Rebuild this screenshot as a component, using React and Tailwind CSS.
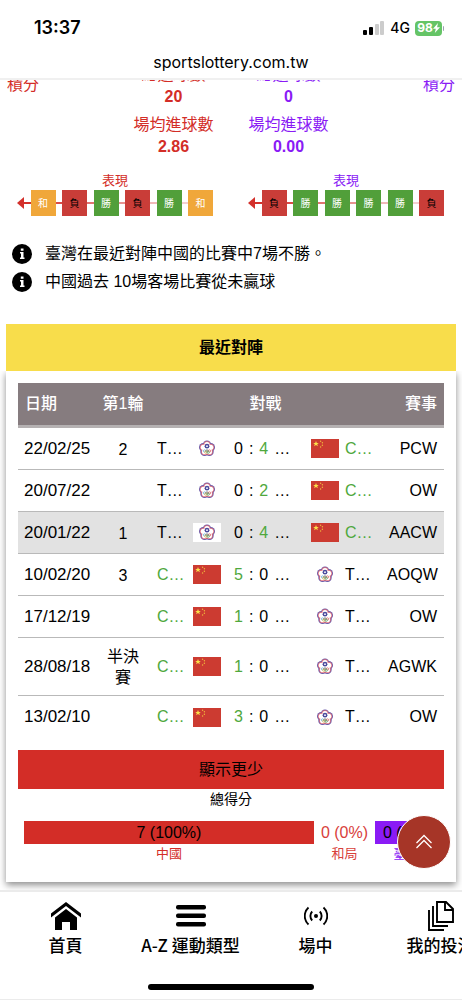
import clsx from 'clsx';

const matches = [
  { date: '22/02/25', round: '2', home: 'TPE', score: [0, 4], comp: 'PCW' },
  { date: '20/07/22', round: '', home: 'TPE', score: [0, 2], comp: 'OW' },
  { date: '20/01/22', round: '1', home: 'TPE', score: [0, 4], comp: 'AACW', active: true },
  { date: '10/02/20', round: '3', home: 'CHN', score: [5, 0], comp: 'AOQW' },
  { date: '17/12/19', round: '', home: 'CHN', score: [1, 0], comp: 'OW' },
  { date: '28/08/18', round: '半決賽', home: 'CHN', score: [1, 0], comp: 'AGWK' },
  { date: '13/02/10', round: '', home: 'CHN', score: [3, 0], comp: 'OW' },
];

const facts = ['臺灣在最近對陣中國的比賽中7場不勝。', '中國過去 10場客場比賽從未贏球'];

const formColors = {
  和: 'bg-[#f0a73a] text-white',
  負: 'bg-[#c93d38] text-black',
  勝: 'bg-[#519f3a] text-white',
};

// connectors get paler towards the older results
const linkColors = [
  'bg-[#d3302b]',
  'bg-[#d94b48]',
  'bg-[#e07472]',
  'bg-[#e79291]',
  'bg-[#f0b9b9]',
  'bg-[#f4d0d0]',
];

function ChinaFlag() {
  return (
    <svg className="mx-auto block" width="28" height="19" viewBox="0 0 28 19">
      <rect width="28" height="19" fill="#cc3b31" />
      <path
        d="M5 2l.8 1.900h2L6.200 5.200l.7 2L5 6 3.100 7.200l.7-2L2.200 3.900h2z"
        fill="#fbe04a"
      />
      <circle cx="9.600" cy="2.200" r=".7" fill="#f0b63c" />
      <circle cx="11.400" cy="3.800" r=".7" fill="#f0b63c" />
      <circle cx="11.400" cy="6.200" r=".7" fill="#f0b63c" />
      <circle cx="9.600" cy="8" r=".7" fill="#f0b63c" />
    </svg>
  );
}

function TaipeiFlag() {
  const petals = [
    [14, 5.7],
    [17.7, 8.3],
    [16.4, 12.7],
    [11.6, 12.7],
    [10.3, 8.3],
  ];
  return (
    <svg className="mx-auto block" width="28" height="19" viewBox="0 0 28 19">
      <rect width="28" height="19" fill="#fff" />
      {petals.map(([x, y]) => (
        <circle key={`o${x}-${y}`} cx={x} cy={y} r="4.3" fill="#6a5aa8" />
      ))}
      {petals.map(([x, y]) => (
        <circle key={`m${x}-${y}`} cx={x} cy={y} r="3.4" fill="#e0707c" />
      ))}
      {petals.map(([x, y]) => (
        <circle key={`i${x}-${y}`} cx={x} cy={y} r="2.6" fill="#fff" />
      ))}
      <circle cx="14" cy="9.700" r="4" fill="#fff" />
      <circle cx="14" cy="7.200" r="2.400" fill="#4b4a9c" />
      <circle cx="14" cy="7.200" r=".9" fill="#fff" />
      <g fill="none" strokeWidth=".7">
        <circle cx="11.600" cy="12" r="1.200" stroke="#5aa9d6" />
        <circle cx="14" cy="12" r="1.200" stroke="#555" />
        <circle cx="16.400" cy="12" r="1.200" stroke="#dd5555" />
        <circle cx="12.800" cy="13.200" r="1.200" stroke="#e3b94d" />
        <circle cx="15.200" cy="13.200" r="1.200" stroke="#4fae72" />
      </g>
    </svg>
  );
}

function StatusBar() {
  return (
    <div className="flex h-14 items-center justify-between pl-[34px] pr-[18px]">
      <span className="text-lg font-semibold">13:37</span>
      <div className="flex items-center">
        <svg width="22" height="14" viewBox="0 0 22 14">
          <rect x="0" y="9" width="4" height="5" rx="1" fill="#000" />
          <rect x="6" y="6" width="4" height="8" rx="1" fill="#000" />
          <rect x="12" y="3" width="4" height="11" rx="1" fill="#ccc" />
          <rect x="17" y="0" width="4" height="14" rx="1" fill="#ccc" />
        </svg>
        <span className="ml-[5px] text-sm font-medium">4G</span>
        <div className="ml-[5px] flex h-[15px] w-[27px] items-center justify-center rounded bg-[#65c466] text-xs font-bold text-white">
          98
          <svg width="7" height="10" viewBox="0 0 7 10">
            <path d="M5 0L0 5.800h2.800L1.800 10 7 4.200H4.100z" fill="#fff" />
          </svg>
        </div>
        <span className="ml-px h-[5px] w-px rounded-r bg-gray-400" />
      </div>
    </div>
  );
}

function StatColumn({ total, average }) {
  return (
    <dl className="text-center">
      <dt className="leading-[26px]">總進球數</dt>
      <dd className="mb-[6px] font-bold leading-[18px]">{total}</dd>
      <dt className="leading-[26px]">場均進球數</dt>
      <dd className="font-bold leading-[18px]">{average}</dd>
    </dl>
  );
}

function Form({ results, color }) {
  return (
    <div className="flex-1 pl-[17px] pr-[18px]">
      <p className={clsx('text-center text-[13px] leading-[18px]', color)}>表現</p>
      <div className="flex items-center">
        <svg width="7" height="12" viewBox="0 0 7 12">
          <path d="M7 0v12L0 6z" fill="#d3302b" />
        </svg>
        {results.map((r, i) => (
          <div key={i} className="flex flex-1 items-center">
            <span className={clsx('h-[2px] flex-1', linkColors[i])} />
            <span
              className={clsx(
                'flex h-[26px] w-[25px] items-center justify-center text-[10px]',
                formColors[r]
              )}
            >
              {r}
            </span>
          </div>
        ))}
      </div>
    </div>
  );
}

function TeamName({ team }) {
  return team === 'CHN' ? <span className="text-[#4fa83d]">C…</span> : <span>T…</span>;
}

function Flag({ team }) {
  return team === 'CHN' ? <ChinaFlag /> : <TaipeiFlag />;
}

function MatchRow({ match, last }) {
  const away = match.home === 'CHN' ? 'TPE' : 'CHN';
  const [h, a] = match.score;
  const cell = clsx('h-[42px] p-0', !last && 'border-b border-[#b9b9b9]');
  return (
    <tr className={clsx(match.active && 'bg-[#e2e2e2]')}>
      <td className={clsx(cell, 'text-[17px]')}>
        <span className="pl-[6px]">{match.date}</span>
      </td>
      <td className={clsx(cell, 'text-center leading-[21px]')}>
        <div className="mx-1 pt-2 pb-[7px]">{match.round}</div>
      </td>
      <td className={cell}>
        <span className="pl-[13px]">
          <TeamName team={match.home} />
        </span>
      </td>
      <td className={cell}>
        <Flag team={match.home} />
      </td>
      <td className={cell}>
        <div className="flex gap-[6px] pl-[7px]">
          <span className={clsx(h > a && 'text-[#4fa83d]')}>{h}</span>
          <span>:</span>
          <span className={clsx(a > h && 'text-[#4fa83d]')}>{a}</span>
          <span>…</span>
        </div>
      </td>
      <td className={cell}>
        <Flag team={away} />
      </td>
      <td className={cell}>
        <TeamName team={away} />
      </td>
      <td className={clsx(cell, 'text-right')}>
        <span className="pr-[7px]">{match.comp}</span>
      </td>
    </tr>
  );
}

function MatchTable() {
  const head = 'h-[45px] border-b-[3px] border-[#b5b1b2] p-0 font-medium';
  return (
    <table className="w-full table-fixed border-separate border-spacing-0">
      <colgroup>
        <col className="w-[84px]" />
        <col className="w-[42px]" />
        <col className="w-[43px]" />
        <col className="w-[40px]" />
        <col className="w-[77px]" />
        <col className="w-[41px]" />
        <col className="w-[42px]" />
        <col />
      </colgroup>
      <thead className="bg-[#867c7f] text-white">
        <tr>
          <th className={clsx(head, 'pl-[7px] text-left')}>日期</th>
          <th className={clsx(head, 'whitespace-nowrap')}>第1輪</th>
          <th colSpan={5} className={head}>
            對戰
          </th>
          <th className={clsx(head, 'pr-[7px] text-right')}>賽事</th>
        </tr>
      </thead>
      <tbody>
        {matches.map((m, i) => (
          <MatchRow key={m.date} match={m} last={i === matches.length - 1} />
        ))}
      </tbody>
    </table>
  );
}

function TotalScore() {
  return (
    <div className="text-center">
      <h3 className="text-sm leading-5">總得分</h3>
      <div className="mt-3 flex gap-[7px] px-[6px] leading-[23px]">
        <div className="flex-1">
          <div className="bg-[#d32d27]">7 (100%)</div>
          <div className="text-[13px] leading-5 text-[#d32d27]">中國</div>
        </div>
        <div className="text-[#d8403b]">
          <div>0 (0%)</div>
          <div className="text-[13px] leading-5">和局</div>
        </div>
        <div className="w-[63px]">
          <div className="bg-[#8a1bf5]">0 (0%)</div>
          <div className="text-[13px] leading-5 text-[#8a1bf5]">臺灣</div>
        </div>
      </div>
    </div>
  );
}

const navItems = [
  {
    label: '首頁',
    icon: (
      <svg width="30" height="28" viewBox="0 0 30 28">
        <path d="M0 11.500L15 0l15 11.500v4L15 4 0 15.500z" />
        <path d="M4 15.500L15 7l11 8.500V28h-7v-8h-8v8H4z" />
      </svg>
    ),
  },
  {
    label: 'A-Z 運動類型',
    icon: (
      <svg width="30" height="28" viewBox="0 0 30 28">
        <rect y="3" width="30" height="4.500" rx="2" />
        <rect y="11.500" width="30" height="4.500" rx="2" />
        <rect y="20" width="30" height="4.500" rx="2" />
      </svg>
    ),
  },
  {
    label: '場中',
    icon: (
      <svg width="24" height="28" viewBox="0 0 24 28" fill="none" stroke="#000" strokeWidth="1.900">
        <circle cx="12" cy="14" r="2" fill="#000" stroke="none" />
        <path d="M8.200 9.500a6.500 6.500 0 000 9M15.800 9.500a6.500 6.500 0 010 9M4.500 5.500a11.500 11.500 0 000 17M19.500 5.500a11.500 11.500 0 010 17" />
      </svg>
    ),
  },
  {
    label: '我的投注',
    icon: (
      <svg width="26" height="30" viewBox="0 0 26 30" fill="none" stroke="#000" strokeWidth="1.900">
        <path d="M9 1h9l7 7v13H9zM17 1v8h8M5 5v20h15M1 9v20h15" />
      </svg>
    ),
  },
];

function BottomNav() {
  return (
    <nav className="fixed inset-x-0 bottom-0 h-[110px] overflow-hidden border-b border-t-2 border-[#ebebeb] bg-white">
      <div className="flex pl-[3px] pt-[7px]">
        {navItems.map((item) => (
          <a
            key={item.label}
            href="#"
            className="flex w-[125px] shrink-0 flex-col items-center font-['Noto_Sans_CJK_TC',sans-serif] text-[17px] font-medium leading-6"
          >
            <span className="flex h-[34px] items-center">{item.icon}</span>
            {item.label}
          </a>
        ))}
      </div>
      <div className="mx-auto mt-[27px] h-[6px] w-[166px] rounded-full bg-black" />
    </nav>
  );
}

export default function App() {
  return (
    <div
      lang="zh-Hant"
      className="min-h-screen overflow-hidden bg-white font-['Liberation_Sans','Noto_Sans_CJK_TC',sans-serif] text-base text-black"
    >
      <header className="sticky top-0 z-10 h-20 border-b-2 border-[#f0f0f0] bg-white font-['Inter',sans-serif]">
        <StatusBar />
        <p className="text-center leading-3">sportslottery.com.tw</p>
      </header>

      <main className="-mt-[18px] pb-[118px]">
        <section className="grid grid-cols-[1fr_115px_115px_1fr] px-[7px]">
          <p className="mt-[10px] leading-[26px] text-[#d32d27]">積分</p>
          <div className="text-[#d32d27]">
            <StatColumn total="20" average="2.86" />
          </div>
          <div className="text-[#8a1bf5]">
            <StatColumn total="0" average="0.00" />
          </div>
          <p className="mt-[10px] text-right leading-[26px] text-[#8a1bf5]">積分</p>
        </section>

        <section className="mt-4 flex">
          <Form results={['和', '負', '勝', '負', '勝', '和']} color="text-[#d32d27]" />
          <Form results={['負', '勝', '勝', '勝', '勝', '負']} color="text-[#8a1bf5]" />
        </section>

        <ul className="mt-6 px-3">
          {facts.map((fact) => (
            <li key={fact} className="flex h-7 items-center gap-[13px]">
              <svg width="20" height="20" viewBox="0 0 20 20" className="shrink-0">
                <circle cx="10" cy="10" r="10" />
                <path d="M8.800 4.500h2.700v2.300H8.800zM8 8h3.500v5.500h1V15H8v-1.500h1V9.500H8z" fill="#fff" />
              </svg>
              {fact}
            </li>
          ))}
        </ul>

        <section className="mx-[6px] mt-7">
          <h2 className="bg-[#f8dd4b] text-center font-bold leading-[47px]">最近對陣</h2>
          <div className="bg-white px-3 pb-[18px] pt-3 shadow-[0_3px_7px_rgba(0,0,0,0.45)] [clip-path:inset(0_-12px_-12px_-12px)]">
            <MatchTable />
            <button className="mt-3 block h-[39px] w-full bg-[#d32d27]">顯示更少</button>
            <TotalScore />
          </div>
        </section>
      </main>

      <button
        aria-label="回到頂部"
        className="fixed bottom-[131px] right-[11px] flex h-[54px] w-[54px] items-center justify-center rounded-full border border-white bg-[#a63527]"
      >
        <svg width="18" height="16" viewBox="0 0 18 16" fill="none" stroke="#fff" strokeWidth="1.300">
          <path d="M1.500 9L9 1.500 16.500 9M1.500 14L9 6.500l7.500 7.500" />
        </svg>
      </button>
      <BottomNav />
    </div>
  );
}
